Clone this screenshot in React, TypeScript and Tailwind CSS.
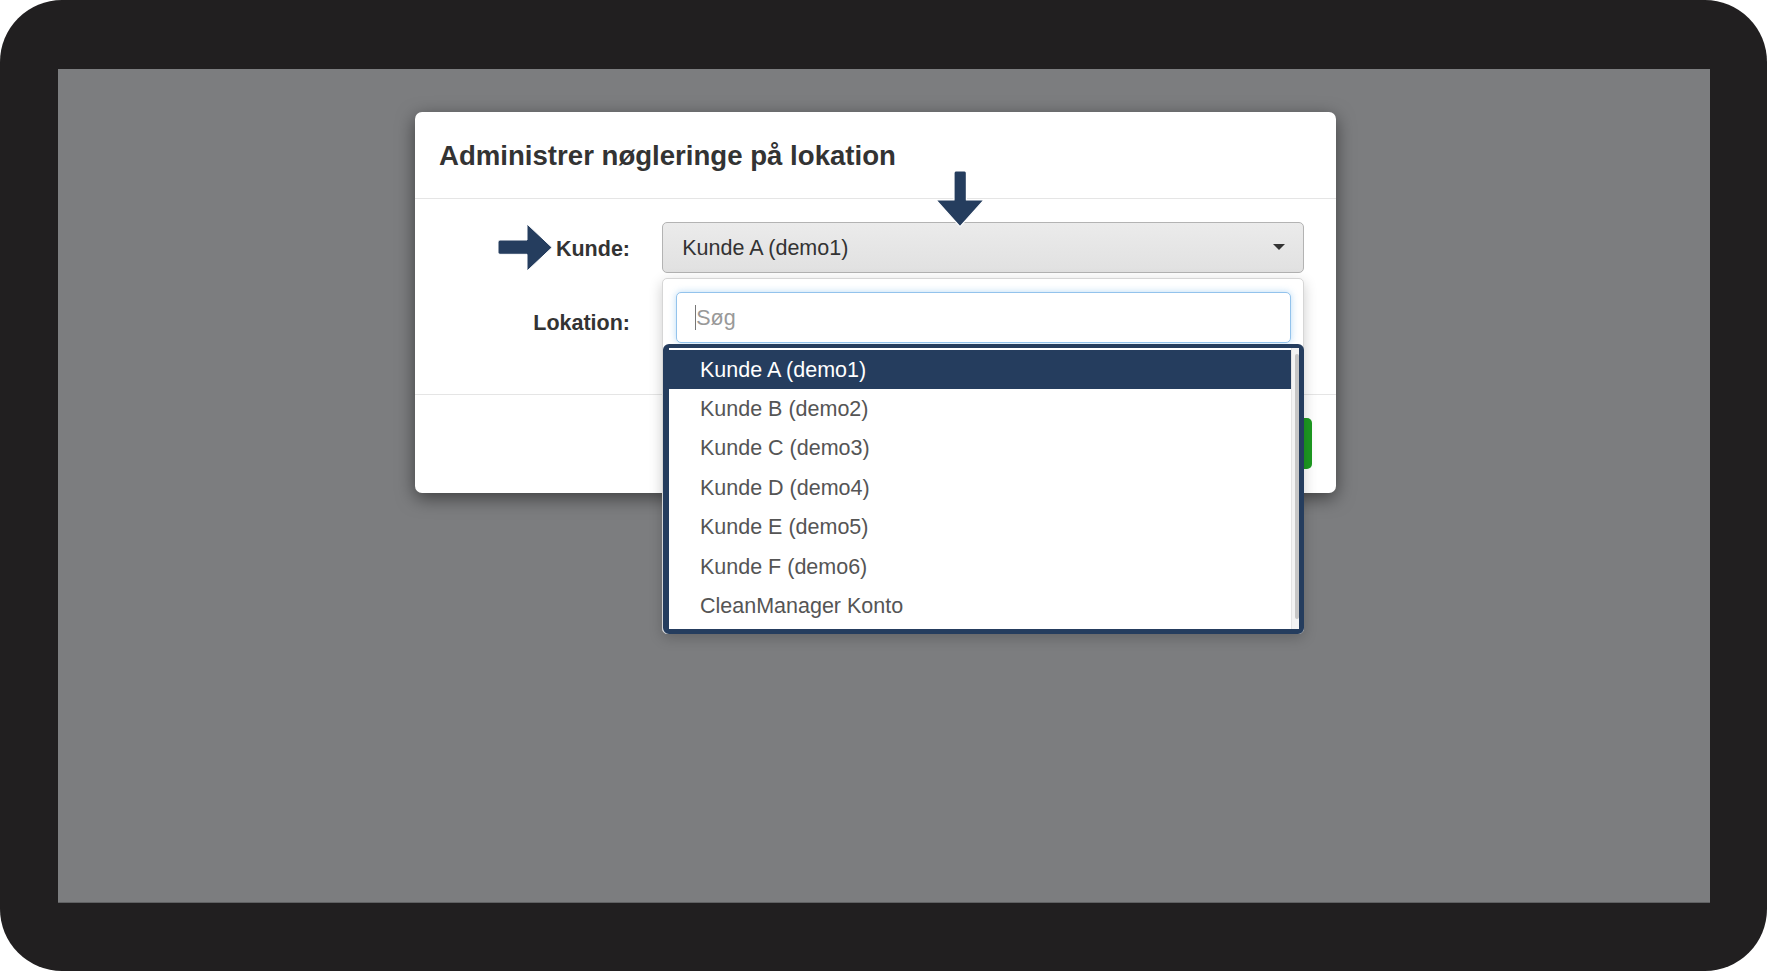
import React from 'react';

const customers = [
  'Kunde A (demo1)',
  'Kunde B (demo2)',
  'Kunde C (demo3)',
  'Kunde D (demo4)',
  'Kunde E (demo5)',
  'Kunde F (demo6)',
  'CleanManager Konto',
];

const RightArrow: React.FC = () => (
  <svg
    className="absolute left-[82px] top-[110.5px] z-20"
    width="56"
    height="49"
    viewBox="-1 -1 56 49"
  >
    <path
      d="M2 16 H29 V0 L54 23.5 L29 47 V30.3 H2 Q0 30.3 0 28.3 V18 Q0 16 2 16 Z"
      fill="#253d5e"
      stroke="#ffffff"
      strokeWidth="1"
      strokeLinejoin="round"
    />
  </svg>
);

const DownArrow: React.FC = () => (
  <svg
    className="absolute left-[519.5px] top-[57.5px] z-20"
    width="50"
    height="58"
    viewBox="-1 -1 50 58"
  >
    <path
      d="M18 2 Q18 0 20 0 H28.4 Q30.4 0 30.4 2 V29 H48 L24 55.7 L0 29 H18 Z"
      fill="#253d5e"
      stroke="#ffffff"
      strokeWidth="1.2"
      strokeLinejoin="round"
    />
  </svg>
);

const Dropdown: React.FC = () => (
  <div className="absolute top-[165.5px] left-[246.7px] w-[642px] z-10 flex flex-col rounded-[5px] border border-[#d6d6d6] bg-white shadow-[0_4px_14px_rgba(0,0,0,0.2)]">
    {/* Search */}
    <div className="pt-[13px] pl-[13px] pr-[11.6px]">
      <div className="h-[50.6px] rounded-[5px] border border-[#93c3ec] bg-white shadow-[0_0_7px_rgba(102,175,233,0.45)] flex items-center pl-[18px] pt-[1px]">
        <span className="w-[1.5px] h-[25px] bg-[#777]" />
        <span className="text-[21.5px] text-[#999]">Søg</span>
      </div>
    </div>

    {/* Result list */}
    <div className="mt-[1px] ml-[0.6px] -mr-[1px] -mb-[1px] flex rounded-[6px] border-t-[4px] border-l-[6px] border-r-[5px] border-b-[5px] border-[#253d5e] bg-white">
      <ul className="flex-1 pt-[2px] pb-[4px]">
        {customers.map((c, i) => (
          <li
            key={c}
            className={
              i === 0
                ? 'h-[39.4px] leading-[41px] pl-[30.7px] text-[21.5px] bg-[#253d5e] text-white'
                : 'h-[39.4px] leading-[41px] pl-[30.7px] text-[21.5px] text-[#555]'
            }
          >
            {c}
          </li>
        ))}
      </ul>
      <div className="w-[7.6px] bg-[#f3f3f3] border-l border-[#e4e4e4] pt-[6px] pb-[10px] flex justify-end">
        <div className="w-[3.5px] rounded-full bg-[#c6c6c6]" />
      </div>
    </div>
  </div>
);

export default function App() {
  return (
    <div className="w-[1767px] h-[971px] bg-white font-['Liberation_Sans',Arial,sans-serif]">
      <div className="h-full flex rounded-[62px] bg-[#211f20] pt-[68.7px] pl-[57.5px] pr-[57.5px] pb-[68.5px]">
        <div className="flex-1 bg-[#7c7d7f] border-b border-[#606163]">
          {/* Modal */}
          <div className="relative ml-[357.5px] mt-[43.8px] w-[920.5px] rounded-[7px] bg-white shadow-[0_5px_18px_rgba(0,0,0,0.5)]">
            <div className="px-[24px] pt-[24.5px] pb-[23.5px] border-b border-[#e5e5e5]">
              <h4 className="text-[27.6px] leading-[38px] font-bold text-[#333]">
                Administrer nøgleringe på lokation
              </h4>
            </div>

            <div className="pl-[24px] pt-[22.8px] pb-[47.3px] flex flex-col gap-[23.9px]">
              <div className="flex items-center h-[50.4px]">
                <label className="w-[191px] h-[50.4px] pt-[1.5px] text-right text-[21.5px] font-bold text-[#333] leading-[50.4px]">
                  Kunde:
                </label>
                <div className="ml-[31.7px] w-[642px] h-[50.4px] rounded-[5px] border border-[#b3b3b3] bg-linear-to-b from-[#ebebeb] to-[#e1e1e1] flex items-center justify-between pl-[19.5px] pr-[18px]">
                  <span className="pt-[2px] text-[21.5px] text-[#333]">Kunde A (demo1)</span>
                  <span className="w-0 h-0 border-l-[6px] border-r-[6px] border-t-[6px] border-l-transparent border-r-transparent border-t-[#333]" />
                </div>
              </div>
              <div className="flex items-center h-[50.4px]">
                <label className="w-[191px] h-[50.4px] pt-[1.5px] text-right text-[21.5px] font-bold text-[#333] leading-[50.4px]">
                  Lokation:
                </label>
                <div className="ml-[31.7px] w-[642px] h-[50.4px] rounded-[5px] border border-[#ccc] bg-white" />
              </div>
            </div>

            <div className="border-t border-[#e5e5e5] pt-[23px] pb-[23.5px] px-[23.5px] flex justify-end gap-[7px]">
              <button className="h-[51px] px-[18px] rounded-[5px] border border-[#ccc] bg-white text-[21.5px] text-[#333]">
                Luk
              </button>
              <button className="h-[51px] px-[18px] rounded-[5px] bg-[#1d9a21] text-[21.5px] text-white">
                Gem
              </button>
            </div>

            <RightArrow />
            <DownArrow />
            <Dropdown />
          </div>
        </div>
      </div>
    </div>
  );
}
